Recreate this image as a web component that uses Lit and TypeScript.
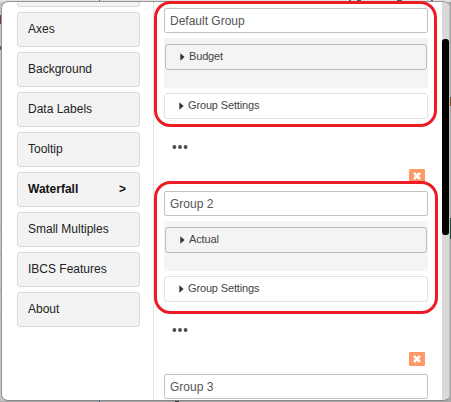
import { LitElement, html, css, nothing } from "lit";
import { customElement, property } from "lit/decorators.js";

@customElement("settings-nav")
class SettingsNav extends LitElement {
  static styles = css`
    :host { display: flex; flex-direction: column; gap: 5px; width: 123px; margin-left: 15px; margin-top: -30px; flex: none; }
    .item {
      box-sizing: border-box; height: 35px; flex: none; display: flex; align-items: center; justify-content: space-between;
      padding: 0 13px 2px 10px; border: 1px solid #dadada; border-radius: 3px; background: #f3f3f3;
      font: 12px/16px "Liberation Sans", Arial, sans-serif; color: #222; white-space: nowrap;
    }
    .active { font-weight: bold; color: #111; }
  `;
  render() {
    const items = ["", "Axes", "Background", "Data Labels", "Tooltip", "Waterfall", "Small Multiples", "IBCS Features", "About"];
    return items.map((t) => t === "Waterfall"
      ? html`<div class="item active"><span>${t}</span><span>&gt;</span></div>`
      : html`<div class="item"><span>${t}</span></div>`);
  }
}

@customElement("group-card")
class GroupCard extends LitElement {
  @property() name = "";
  @property() series = "";
  static styles = css`
    :host { display: block; width: 264px; font: 11px/14px "Liberation Sans", Arial, sans-serif; color: #444; }
    .input, .row { box-sizing: border-box; display: flex; align-items: center; white-space: nowrap; }
    .input { height: 25px; border: 1px solid #c2c2c2; border-radius: 2px; padding: 0 5px 0; font-size: 12px; color: #555; background: #fff; }
    .series { box-sizing: border-box; height: 50px; margin: 5px 0; padding: 6px 1px; background: #f4f4f4; }
    .row { height: 26px; border: 1px solid #e3e3e3; border-radius: 3px; padding: 0 14px 2px; gap: 4px; background: #fff; }
    .series .row { border-color: #bdbdbd; background: #f4f4f4; }
    .label { letter-spacing: -0.15px; }
    svg { display: block; margin-top: 1px; }
    .more { display: block; margin: 25px 0 0 8px; }
  `;
  row(label: string) {
    return html`<div class="row">
      <svg width="5" height="8" viewBox="0 0 5 8"><path d="M0.3 0.3L4.6 4L0.3 7.7Z" fill="#333" /></svg>
      <span class="label">${label}</span>
    </div>`;
  }
  render() {
    return html`
      <div class="input">${this.name}</div>
      ${this.series
        ? html`
            <div class="series">${this.row(this.series)}</div>
            ${this.row("Group Settings")}
            <svg class="more" width="17" height="6" viewBox="0 0 17 6" fill="#4a4a4a">
              <circle cx="2.4" cy="3" r="1.9" /><circle cx="8" cy="3" r="1.9" /><circle cx="13.6" cy="3" r="1.9" />
            </svg>`
        : nothing}
    `;
  }
}

@customElement("remove-button")
class RemoveButton extends LitElement {
  static styles = css`
    :host { display: flex; align-items: center; justify-content: center; width: 16px; height: 14px; background: #ff9a66; border-radius: 1px; }
  `;
  render() {
    return html`<svg width="10" height="10" viewBox="0 0 10 10"><path d="M2 2L8 8M8 2L2 8" stroke="#fff" stroke-width="2.5" /></svg>`;
  }
}

@customElement("app-root")
class AppRoot extends LitElement {
  static styles = css`
    :host { display: block; position: relative; width: 451px; height: 402px; overflow: hidden; background: linear-gradient(90deg, #c4c4c4 0 50%, #a6a6a6 50%); }
    .behind { position: absolute; left: 0; top: 0; }
    .dialog {
      position: relative; box-sizing: border-box; width: 449px; height: 400px; margin: 1px 0 0 1px;
      border: 1px solid #969696; border-right-color: #c0c0c0; border-bottom-color: #858585; border-radius: 7px; overflow: hidden; background: #fff; display: flex;
    }
    .divider { flex: none; width: 1px; margin-left: 13px; background: #e4e4e4; }
    .pane { display: flex; flex-direction: column; width: 264px; margin: 6px 0 0 10px; flex: none; }
    .remove { margin: 19px 3px 8px 0; align-self: flex-end; flex: none; }
    .track { flex: none; width: 7px; margin-left: auto; background: #d9d9d9; }
    .thumb { height: 196px; margin-top: 37px; background: #000; border-radius: 3px; }
    .marks { position: absolute; left: 0; top: 0; }
  `;
  render() {
    return html`
      <svg class="behind" width="451" height="402" shape-rendering="crispEdges">
        <rect width="451" height="2" fill="#e2e2e2" />
        <rect y="15" width="2" height="9" fill="#7a3462" />
        <rect y="46" width="2" height="4" fill="#555" />
        <rect y="230" width="2" height="1" fill="#d9a066" />
        <rect y="255" width="2" height="1" fill="#d9a066" />
        <rect y="288" width="2" height="1" fill="#d9a066" />
        <rect y="313" width="2" height="1" fill="#d9a066" />
        <rect x="99" width="1" height="2" fill="#2878b8" />
        <path d="M349 0.5h2M357 0.5h4M397 0.5h5M431 0.5h2" stroke="#4b5b68" />
        <rect x="450" y="97" width="1" height="9" fill="#7a4a20" />
        <rect x="450" y="218" width="1" height="21" fill="#1f4a3b" />
        <rect y="401" width="451" height="1" fill="#aaa" />
        <rect x="99" y="401" width="1" height="1" fill="#2b579a" />
        <rect x="175" y="401" width="4" height="1" fill="#333" />
      </svg>
      <div class="dialog">
        <settings-nav></settings-nav>
        <div class="divider"></div>
        <div class="pane">
          <group-card name="Default Group" series="Budget"></group-card>
          <remove-button class="remove"></remove-button>
          <group-card name="Group 2" series="Actual"></group-card>
          <remove-button class="remove"></remove-button>
          <group-card name="Group 3"></group-card>
        </div>
        <div class="track"><div class="thumb"></div></div>
      </div>
      <svg class="marks" width="451" height="402" fill="none" stroke="#ed1c24" stroke-width="3">
        <rect x="155.5" y="2.5" width="280" height="123" rx="15" />
        <rect x="155.5" y="182.5" width="281" height="130" rx="15" />
      </svg>
    `;
  }
}
